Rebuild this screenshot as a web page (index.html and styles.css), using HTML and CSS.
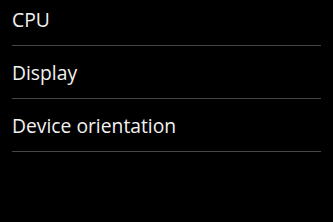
FILE: index.html
```html
<!DOCTYPE html>
<html lang="en">

<head>
  <meta charset="UTF-8">
  <meta name="viewport" content="width=device-width, initial-scale=1.0">
  <title>Settings</title>
  <link rel="stylesheet" href="styles.css">
</head>

<body>
  <ul class="list">
    <li class="item">CPU</li>
    <li class="item">Display</li>
    <li class="item">Device orientation</li>
  </ul>
</body>

</html>
```

FILE: styles.css
```css
html,
body {
  margin: 0;
  height: 100%;
  background-color: #000;
}

.list {
  list-style: none;
  margin: -7px 0 0;
  padding: 0 12px;
}

.item {
  height: 52px;
  display: flex;
  align-items: center;
  border-bottom: 1px solid #464646;
  color: #f2f2f2;
  font-family: "Open Sans", "Noto Sans", sans-serif;
  font-size: 19.3px;
}
```
